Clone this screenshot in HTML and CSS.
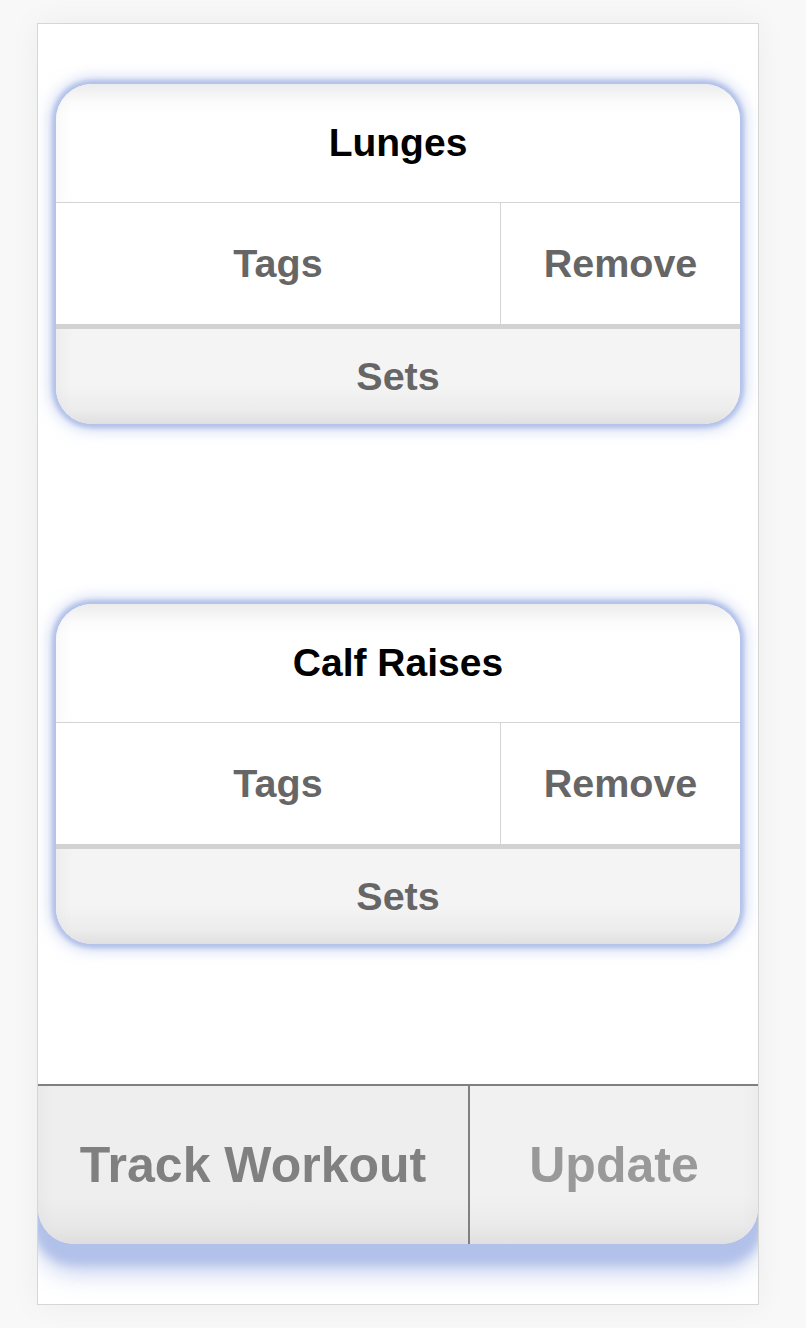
FILE: index.html
```html
<!DOCTYPE html>
<html lang="en">
<head>
<meta charset="utf-8">
<title>Workout</title>
<link rel="stylesheet" href="styles.css">
</head>
<body>
<div class="panel">
  <div class="cards">
    <div class="card">
      <div class="card-title">Lunges</div>
      <div class="card-actions">
        <div class="cell cell-tags">Tags</div>
        <div class="cell cell-remove">Remove</div>
      </div>
      <div class="card-sets">Sets</div>
    </div>
    <div class="card">
      <div class="card-title">Calf Raises</div>
      <div class="card-actions">
        <div class="cell cell-tags">Tags</div>
        <div class="cell cell-remove">Remove</div>
      </div>
      <div class="card-sets">Sets</div>
    </div>
  </div>
  <div class="bar">
    <div class="bar-btn bar-track">Track Workout</div>
    <div class="bar-btn bar-update">Update</div>
  </div>
</div>
</body>
</html>
```

FILE: styles.css
```css
html, body {
  margin: 0;
  padding: 0;
}
body {
  background: #f8f8f8;
  font-family: "Liberation Sans", Arial, Helvetica, sans-serif;
  font-weight: bold;
  height: 1328px;
  overflow: hidden;
}
.panel {
  box-sizing: border-box;
  margin: 23px 0 0 37px;
  width: 722px;
  height: 1282px;
  background: #fff;
  border: 1px solid #d6d6d6;
  box-shadow: 0 0 30px rgba(0, 0, 0, 0.05);
  overflow: hidden;
  display: flex;
  flex-direction: column;
}
.cards {
  padding: 60px 18px 0 18px;
  display: flex;
  flex-direction: column;
  gap: 180px;
}
.card {
  width: 684px;
  height: 340px;
  box-sizing: border-box;
  border-radius: 36px;
  background: #fff;
  overflow: hidden;
  box-shadow: 0 0 4px 4px rgba(178, 193, 233, 1), 0 0 14px 7px rgba(178, 193, 233, 0.55);
  display: flex;
  flex-direction: column;
}
.card-title {
  height: 118px;
  border-bottom: 1px solid #d4d4d4;
  display: flex;
  align-items: center;
  justify-content: center;
  font-size: 39px;
  color: #000;
  background: linear-gradient(#ececec 0, #fbfbfb 18px, #fff 30px);
  box-shadow: inset 18px 0 18px -14px rgba(0, 0, 0, 0.04);
}
.card-actions {
  display: grid;
  grid-template-columns: 445px 1fr;
  height: 121px;
  border-bottom: 5px solid #d2d2d2;
}
.cell {
  display: flex;
  align-items: center;
  justify-content: center;
  font-size: 39.5px;
  color: #666;
  background: #fff;
}
.cell-tags {
  border-right: 1px solid #d4d4d4;
}
.card-sets {
  flex: 1;
  display: flex;
  align-items: center;
  justify-content: center;
  font-size: 39.5px;
  color: #666;
  background: linear-gradient(#f4f4f4 0, #f4f4f4 60%, #ececec 85%, #e0e0e0 100%);
  box-shadow: inset 18px 0 18px -14px rgba(0, 0, 0, 0.04);
}
.bar {
  margin-top: 140px;
  height: 160px;
  box-sizing: border-box;
  border-top: 2px solid #808080;
  border-radius: 0 0 36px 36px;
  display: grid;
  grid-template-columns: 432px 1fr;
  box-shadow: 0 14px 10px 6px rgba(178, 193, 233, 1), 0 28px 24px rgba(178, 193, 233, 0.8);
  overflow: hidden;
}
.bar-btn {
  display: flex;
  align-items: center;
  justify-content: center;
  font-size: 50px;
}
.bar-track {
  color: #808080;
  background: linear-gradient(#eeeeee 0, #eeeeee 70%, #e8e8e8 88%, #dedede 100%);
  border-right: 2px solid #808080;
  box-shadow: inset 18px 0 18px -14px rgba(0, 0, 0, 0.03);
}
.bar-update {
  color: #999;
  background: linear-gradient(#f1f1f1 0, #f1f1f1 70%, #eaeaea 88%, #e0e0e0 100%);
  box-shadow: inset -18px 0 18px -14px rgba(0, 0, 0, 0.03);
}
```
